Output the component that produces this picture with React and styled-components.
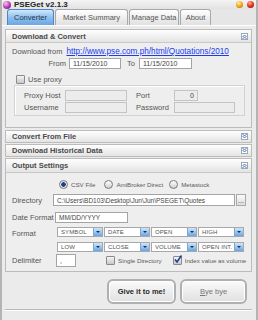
import React from 'react';
import styled, { createGlobalStyle } from 'styled-components';

const Global = createGlobalStyle`
  body {
    margin: 0;
    background: #ffffff;
    font-family: "Liberation Sans", Arial, sans-serif;
  }
`

const Window = styled.div`
  width: 258px;
  height: 320px;
  box-sizing: border-box;
  background: #ebebeb;
  border-left: 2px solid #b4b4b4;
  border-right: 2px solid #b4b4b4;
  display: flex;
  flex-direction: column;
  overflow: hidden;
  font-size: 7.5px;
  color: #555;
  white-space: nowrap;
`

const TitleBar = styled.div`
  height: 13px;
  display: flex;
  align-items: center;
  padding: 0 2px 0 1px;
  background: linear-gradient(#f4f4f4, #e2e2e2);
`

const AppIcon = styled.div`
  width: 8px;
  height: 8px;
  border-radius: 50%;
  background: radial-gradient(circle at 35% 30%, #f6c8f0, #b43ab0 55%, #6a1468);
  margin-right: 3px;
`

const Title = styled.span`
  font-weight: bold;
  font-size: 8px;
  color: #222;
  flex: 1;
`

const Light = styled.div`
  width: 7px;
  height: 7px;
  border-radius: 50%;
  margin-left: 4px;
  background: ${(p) => p.red
    ? 'radial-gradient(circle at 40% 30%, #ffb0a0, #e02a10 55%, #8a1000)'
    : 'radial-gradient(circle at 40% 30%, #fff2a0, #f0a010 55%, #a06000)'};
`

const TabStrip = styled.div`
  height: 17px;
  display: flex;
  align-items: flex-end;
  padding-left: 5px;
  gap: 1px;
  background: #e6e6e6;
`

const Tab = styled.div`
  width: ${(p) => p.w}px;
  height: 16px;
  box-sizing: border-box;
  display: flex;
  align-items: center;
  justify-content: center;
  border: 1px solid ${(p) => (p.active ? '#4a86c8' : '#a8a8a8')};
  border-bottom: none;
  border-radius: 3px 3px 0 0;
  background: ${(p) => p.active
    ? 'linear-gradient(#d4e8fa, #8cc0ee 50%, #6aa6e4)'
    : 'linear-gradient(#ffffff, #ececec 60%, #e0e0e0)'};
  color: ${(p) => (p.active ? '#2a3a4a' : '#555')};
  font-size: 7.5px;
`

const BlueLine = styled.div`
  height: 2px;
  background: #9cc6ec;
  border-top: 1px solid #ffffff;
`

const Content = styled.div`
  flex: 1;
  display: flex;
  flex-direction: column;
  padding: 3px 4px 0 3px;
`

const Panel = styled.div`
  border: 1px solid #bcbcbc;
  background: #eeeeee;
  margin-top: ${(p) => p.mt || 0}px;
`

const PanelHead = styled.div`
  height: ${(p) => p.h || 11}px;
  display: flex;
  align-items: center;
  padding: 0 3px 0 6px;
  background: linear-gradient(#fefefe, #e4e4e4);
  border-bottom: ${(p) => (p.open ? '1px solid #c8c8c8' : 'none')};
  font-weight: bold;
  color: #4a4a4a;
  font-size: 7.5px;
`

const HeadText = styled.span`
  flex: 1;
`

const Toggle = styled.svg`
  width: 7px;
  height: 7px;
  display: block;
`

const Body = styled.div`
  padding: ${(p) => p.pad};
  display: flex;
  flex-direction: column;
`

const Row = styled.div`
  display: flex;
  align-items: ${(p) => p.align || 'center'};
  height: ${(p) => p.h}px;
  margin-top: ${(p) => p.mt || 0}px;
  padding-left: ${(p) => p.pl || 0}px;
`

const Label = styled.span`
  width: ${(p) => p.w}px;
  text-align: ${(p) => p.align || 'left'};
  padding-right: ${(p) => p.pr || 0}px;
  padding-left: ${(p) => p.pl || 0}px;
  flex-shrink: 0;
`

const Small = styled.span`
  font-size: 6.2px;
  color: #5a5a5a;
`

const Link = styled.span`
  color: #1a3cf0;
  text-decoration: underline;
  margin-left: 4px;
  font-size: 8.2px;
`

const Input = styled.div`
  width: ${(p) => p.w}px;
  height: ${(p) => p.h || 11}px;
  box-sizing: border-box;
  border: 1px solid ${(p) => (p.disabled ? '#c4c4c4' : '#a4a4a4')};
  background: ${(p) => (p.disabled ? '#ececec' : '#ffffff')};
  font-size: ${(p) => p.fs || 7}px;
  color: #444;
  display: flex;
  align-items: center;
  justify-content: ${(p) => (p.right ? 'flex-end' : 'flex-start')};
  padding: 0 3px;
  overflow: hidden;
  flex-shrink: 0;
  margin-left: ${(p) => p.ml || 0}px;
`

const Check = styled.div`
  width: 7px;
  height: 7px;
  border: 1px solid #8a8a8a;
  border-radius: 1px;
  background: linear-gradient(#f4f4f4, #c8c8c8);
  margin-right: 3px;
  flex-shrink: 0;
  position: relative;
  margin-left: ${(p) => p.ml || 0}px;
`

const Tick = styled.svg`
  position: absolute;
  left: -1px;
  top: -3px;
  width: 10px;
  height: 10px;
`

const ProxyBox = styled.div`
  margin: 1px 6px 0 8px;
  border: 1px solid #d2d2d2;
  box-shadow: inset 1px 1px 0 #ffffff;
  padding: 4px 0 2px 9px;
  display: flex;
  flex-direction: column;
  gap: 1px;
`

const Radio = styled.div`
  width: 7px;
  height: 7px;
  border-radius: 50%;
  border: 1px solid #7a7a7a;
  background: ${(p) => p.on
    ? 'radial-gradient(circle, #1c3e8c 0 2px, #e8e8e8 2.5px)'
    : 'linear-gradient(#ffffff, #cfcfcf)'};
  margin: 0 3px 0 ${(p) => p.ml}px;
  flex-shrink: 0;
`

const Dots = styled.div`
  width: 10px;
  height: 12px;
  box-sizing: border-box;
  border: 1px solid #a8a8a8;
  background: linear-gradient(#fafafa, #dedede);
  margin-left: 1px;
  font-size: 7px;
  display: flex;
  align-items: flex-end;
  justify-content: center;
  line-height: 8px;
  color: #333;
`

const SelectGrid = styled.div`
  display: grid;
  grid-template-columns: repeat(4, 46px);
  column-gap: 1px;
  row-gap: 5px;
  margin-left: 2px;
`

const Select = styled.div`
  height: 10px;
  box-sizing: border-box;
  border: 1px solid #a8a8a8;
  background: #ffffff;
  display: flex;
  align-items: center;
  padding-left: 3px;
  font-size: 6px;
  letter-spacing: 0.1px;
  color: #555;
`

const SelectText = styled.span`
  flex: 1;
  overflow: hidden;
`

const DropBtn = styled.div`
  width: 8px;
  height: 8px;
  background: linear-gradient(#cfe6fb, #6aa6e2);
  border-left: 1px solid #7aa8d8;
  display: flex;
  align-items: center;
  justify-content: center;
`

const Arrow = styled.div`
  width: 0;
  height: 0;
  border-left: 2px solid transparent;
  border-right: 2px solid transparent;
  border-top: 2px solid #1c2c4c;
`

const ButtonRow = styled.div`
  display: flex;
  gap: 4px;
  padding-left: 102px;
  margin-top: 7px;
`

const BigButton = styled.div`
  width: ${(p) => p.w}px;
  height: 25px;
  box-sizing: border-box;
  border: 2px solid #b0b0b0;
  border-radius: 6px;
  background: linear-gradient(#fbfbfb, #ededed 50%, #e0e0e0);
  box-shadow: inset 0 0 0 1px #ffffff;
  display: flex;
  align-items: center;
  justify-content: center;
  font-size: 7.5px;
  font-weight: ${(p) => (p.bold ? 'bold' : 'normal')};
  color: ${(p) => (p.bold ? '#2a2a2a' : '#777')};
`

const StatusBar = styled.div`
  height: 10px;
  margin-top: 5px;
  border-top: 1px solid #b8b8b8;
  border-bottom: 1px solid #c4c4c4;
  box-shadow: inset 0 1px 0 #ffffff;
`

function Chevrons({ up }) {
  const d = up ? 'M1.5 4 L3.5 2 L5.5 4 M1.5 6 L3.5 4 L5.5 6' : 'M1.5 1 L3.5 3 L5.5 1 M1.5 3 L3.5 5 L5.5 3'
  return (
    <Toggle viewBox="0 0 7 7">
      <rect x="0.5" y="0.5" width="6" height="6" fill="#ffffff" stroke="#9aa8b8" />
      <path d={d} fill="none" stroke="#3c5ea8" strokeWidth="0.9" />
    </Toggle>
  )
}

function Header({ children, open, h }) {
  return (
    <PanelHead open={open} h={h}>
      <HeadText>{children}</HeadText>
      <Chevrons up={open} />
    </PanelHead>
  )
}

function Dropdown({ value }) {
  return (
    <Select>
      <SelectText>{value}</SelectText>
      <DropBtn><Arrow /></DropBtn>
    </Select>
  )
}

const formats = ['SYMBOL', 'DATE', 'OPEN', 'HIGH', 'LOW', 'CLOSE', 'VOLUME', 'OPEN INT.']

export default function App() {
  return (
    <Window>
      <Global />
      <TitleBar>
        <AppIcon />
        <Title>PSEGet v2.1.3</Title>
        <Light />
        <Light red />
      </TitleBar>
      <TabStrip>
        <Tab w={47} active>Converter</Tab>
        <Tab w={73}>Market Summary</Tab>
        <Tab w={50}>Manage Data</Tab>
        <Tab w={31}>About</Tab>
      </TabStrip>
      <BlueLine />
      <Content>
        <Panel>
          <Header open h={12}>Download &amp; Convert</Header>
          <Body pad="4px 0 11px 0">
            <Row h={10} pl={6} align="baseline">
              Download from<Link>http://www.pse.com.ph/html/Quotations/2010</Link>
            </Row>
            <Row h={11} mt={1}>
              <Label w={60} align="right" pr={3}>From</Label>
              <Input w={52}>11/15/2010</Input>
              <Label w={14} align="right" pr={4}>To</Label>
              <Input w={53}>11/15/2010</Input>
            </Row>
            <Row h={10} mt={5} pl={10}>
              <Check />Use proxy
            </Row>
            <ProxyBox>
              <Row h={11}>
                <Label w={41}>Proxy Host</Label>
                <Input w={62} disabled />
                <Label w={38} pl={9}>Port</Label>
                <Input w={24} disabled right>0</Input>
              </Row>
              <Row h={11}>
                <Label w={41}>Username</Label>
                <Input w={62} disabled />
                <Label w={38} pl={9}>Password</Label>
                <Input w={61} disabled />
              </Row>
            </ProxyBox>
          </Body>
        </Panel>
        <Panel mt={2}>
          <Header>Convert From File</Header>
        </Panel>
        <Panel mt={1}>
          <Header>Download Historical Data</Header>
        </Panel>
        <Panel mt={1}>
          <Header open h={13}>Output Settings</Header>
          <Body pad="5px 0 4px 0">
            <Row h={12}>
              <Radio on ml={53} /><Small>CSV File</Small>
              <Radio ml={9} /><Small>AmiBroker Direct</Small>
              <Radio ml={6} /><Small>Metastock</Small>
            </Row>
            <Row h={12} mt={4} pl={6}>
              <Label w={41}>Directory</Label>
              <Input w={182} h={12} fs={6.5}>C:\Users\BD103\Desktop\Jun\Jun\PSEGET\Quotes</Input>
              <Dots>...</Dots>
            </Row>
            <Row h={11} mt={6} pl={6}>
              <Label w={43}>Date Format</Label>
              <Input w={73} fs={6.5}>MM/DD/YYYY</Input>
            </Row>
            <Row h={25} mt={4} pl={6} align="flex-start">
              <Label w={43} style={{ marginTop: 2 }}>Format</Label>
              <SelectGrid>
                {formats.map((f) => <Dropdown key={f} value={f} />)}
              </SelectGrid>
            </Row>
            <Row h={13} mt={2} pl={6}>
              <Label w={44}>Delimiter</Label>
              <Input w={20} h={13}>,</Input>
              <Check ml={30} /><Small>Single Directory</Small>
              <Check ml={11}>
                <Tick viewBox="0 0 10 10">
                  <path d="M2 5.5 L4 8 L8.5 1.5" fill="none" stroke="#1c3e9c" strokeWidth="1.6" />
                </Tick>
              </Check><Small>Index value as volume</Small>
            </Row>
          </Body>
        </Panel>
        <ButtonRow>
          <BigButton w={69} bold>Give it to me!</BigButton>
          <BigButton w={67}><span><u>B</u>ye bye</span></BigButton>
        </ButtonRow>
        <StatusBar />
      </Content>
    </Window>
  )
}
